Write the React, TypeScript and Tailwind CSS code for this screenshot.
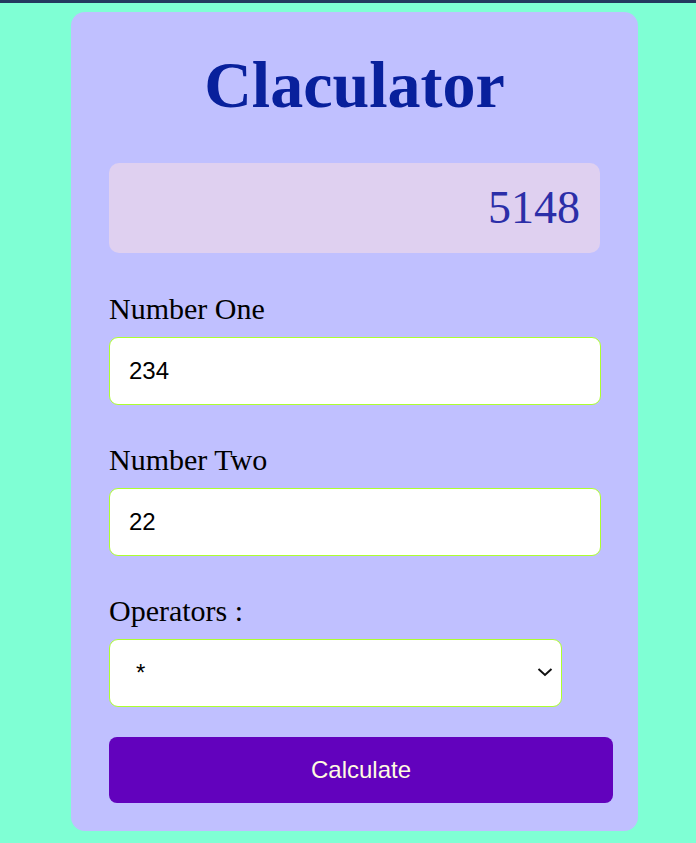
import { useState } from "react";

const serif = "font-['Liberation_Serif','Times_New_Roman',serif]";
const sans = "font-['Liberation_Sans',Arial,sans-serif]";

function Calculator() {
  const [one, setOne] = useState("234");
  const [two, setTwo] = useState("22");
  const [op, setOp] = useState("*");
  const [result, setResult] = useState<number | string>(5148);

  const calculate = () => {
    const a = Number(one);
    const b = Number(two);
    if (op === "+") setResult(a + b);
    else if (op === "-") setResult(a - b);
    else if (op === "*") setResult(a * b);
    else setResult(b === 0 ? "Error" : a / b);
  };

  return (
    <div className="ml-[71px] mt-[9px] flex h-[819px] w-[567px] flex-col rounded-[14px] bg-[#c0c0ff] px-[38px] pt-[40px]">
      <h1
        className={`${serif} h-[66px] text-center text-[66px] font-bold leading-[66px] text-[#08209c]`}
      >
        Claculator
      </h1>

      <div
        className={`${serif} mt-[45px] flex h-[90px] w-[491px] items-center justify-end rounded-[10px] bg-[#dfd0f0] pr-[20px] text-[46px] leading-none text-[#2b2ea8]`}
      >
        {result}
      </div>

      <label className={`${serif} mt-[39px] text-[30px] leading-[34px] text-black`}>
        Number One
      </label>
      <input
        className={`${sans} mt-[11px] h-[68px] w-[492px] rounded-[9px] border border-[#adff2f] bg-white pl-[19px] text-[24px] text-black outline-none`}
        value={one}
        onChange={(e) => setOne(e.target.value)}
      />

      <label className={`${serif} mt-[38px] text-[30px] leading-[34px] text-black`}>
        Number Two
      </label>
      <input
        className={`${sans} mt-[11px] h-[68px] w-[492px] rounded-[9px] border border-[#adff2f] bg-white pl-[19px] text-[24px] text-black outline-none`}
        value={two}
        onChange={(e) => setTwo(e.target.value)}
      />

      <label className={`${serif} mt-[38px] text-[30px] leading-[34px] text-black`}>
        Operators :
      </label>
      <div className="relative mt-[11px] h-[68px] w-[453px]">
        <select
          className={`${sans} h-full w-full appearance-none rounded-[9px] border border-[#adff2f] bg-white pl-[26px] text-[24px] text-black outline-none`}
          value={op}
          onChange={(e) => setOp(e.target.value)}
        >
          <option value="+">+</option>
          <option value="-">-</option>
          <option value="*">*</option>
          <option value="/">/</option>
        </select>
        <svg
          className="pointer-events-none absolute right-[9px] top-[28px]"
          width="16"
          height="10"
          viewBox="0 0 16 10"
          fill="none"
          stroke="#111"
          strokeWidth="2"
        >
          <path d="M1.5 2 L8 8 L14.5 2" />
        </svg>
      </div>

      <button
        className={`${sans} mt-[30px] h-[66px] w-[504px] rounded-[8px] bg-[#6202bd] text-[24px] text-[#fffbe0]`}
        onClick={calculate}
      >
        Calculate
      </button>
    </div>
  );
}

export default function App() {
  return (
    <div className="min-h-[843px] bg-[#7fffd4]">
      <div className="h-[3px] bg-[#24395f]" />
      <Calculator />
    </div>
  );
}
